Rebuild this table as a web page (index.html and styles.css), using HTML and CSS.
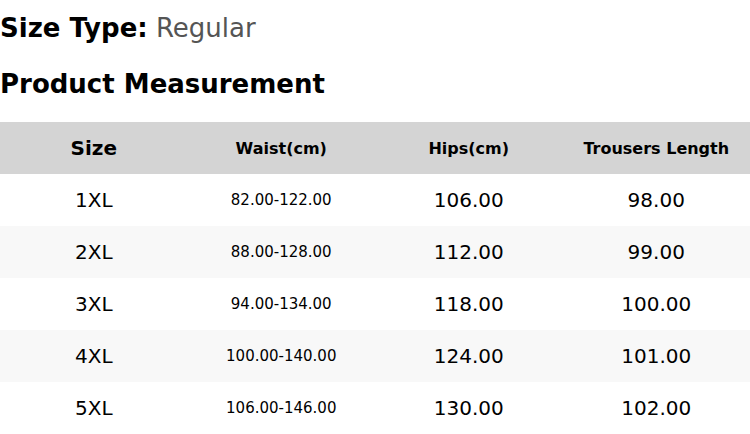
FILE: index.html
```html
<!DOCTYPE html>
<html>
<head>
<meta charset="utf-8">
<link rel="stylesheet" href="styles.css">
</head>
<body>
<div class="size-type"><span class="label">Size Type:</span> <span class="value">Regular</span></div>
<h2 class="title">Product Measurement</h2>
<table class="sizes">
  <thead>
    <tr><th class="big">Size</th><th>Waist(cm)</th><th>Hips(cm)</th><th>Trousers Length</th></tr>
  </thead>
  <tbody>
    <tr><td>1XL</td><td class="small">82.00-122.00</td><td>106.00</td><td>98.00</td></tr>
    <tr><td>2XL</td><td class="small">88.00-128.00</td><td>112.00</td><td>99.00</td></tr>
    <tr><td>3XL</td><td class="small">94.00-134.00</td><td>118.00</td><td>100.00</td></tr>
    <tr><td>4XL</td><td class="small">100.00-140.00</td><td>124.00</td><td>101.00</td></tr>
    <tr><td>5XL</td><td class="small">106.00-146.00</td><td>130.00</td><td>102.00</td></tr>
  </tbody>
</table>
</body>
</html>
```
FILE: styles.css
```css
html, body {
  margin: 0;
  padding: 0;
  background: #fff;
}
body {
  font-family: "DejaVu Sans", sans-serif;
  color: #000;
}
.size-type {
  margin-top: 13px;
  font-size: 26px;
  line-height: 30px;
}
.size-type .label {
  font-weight: bold;
}
.size-type .value {
  color: #555;
}
.title {
  margin: 26px 0 0;
  font-size: 26px;
  line-height: 30px;
  font-weight: bold;
}
.sizes {
  margin-top: 23px;
  width: 100%;
  border-collapse: collapse;
  table-layout: fixed;
}
.sizes th, .sizes td {
  height: 52px;
  padding: 0;
  text-align: center;
  vertical-align: middle;
}
.sizes thead tr {
  background: #d4d4d4;
}
.sizes th {
  font-size: 16px;
  font-weight: bold;
}
.sizes th.big {
  font-size: 20px;
}
.sizes td {
  font-size: 20px;
}
.sizes td.small {
  font-size: 15px;
}
.sizes tbody tr:nth-child(even) {
  background: #f8f8f8;
}
```
